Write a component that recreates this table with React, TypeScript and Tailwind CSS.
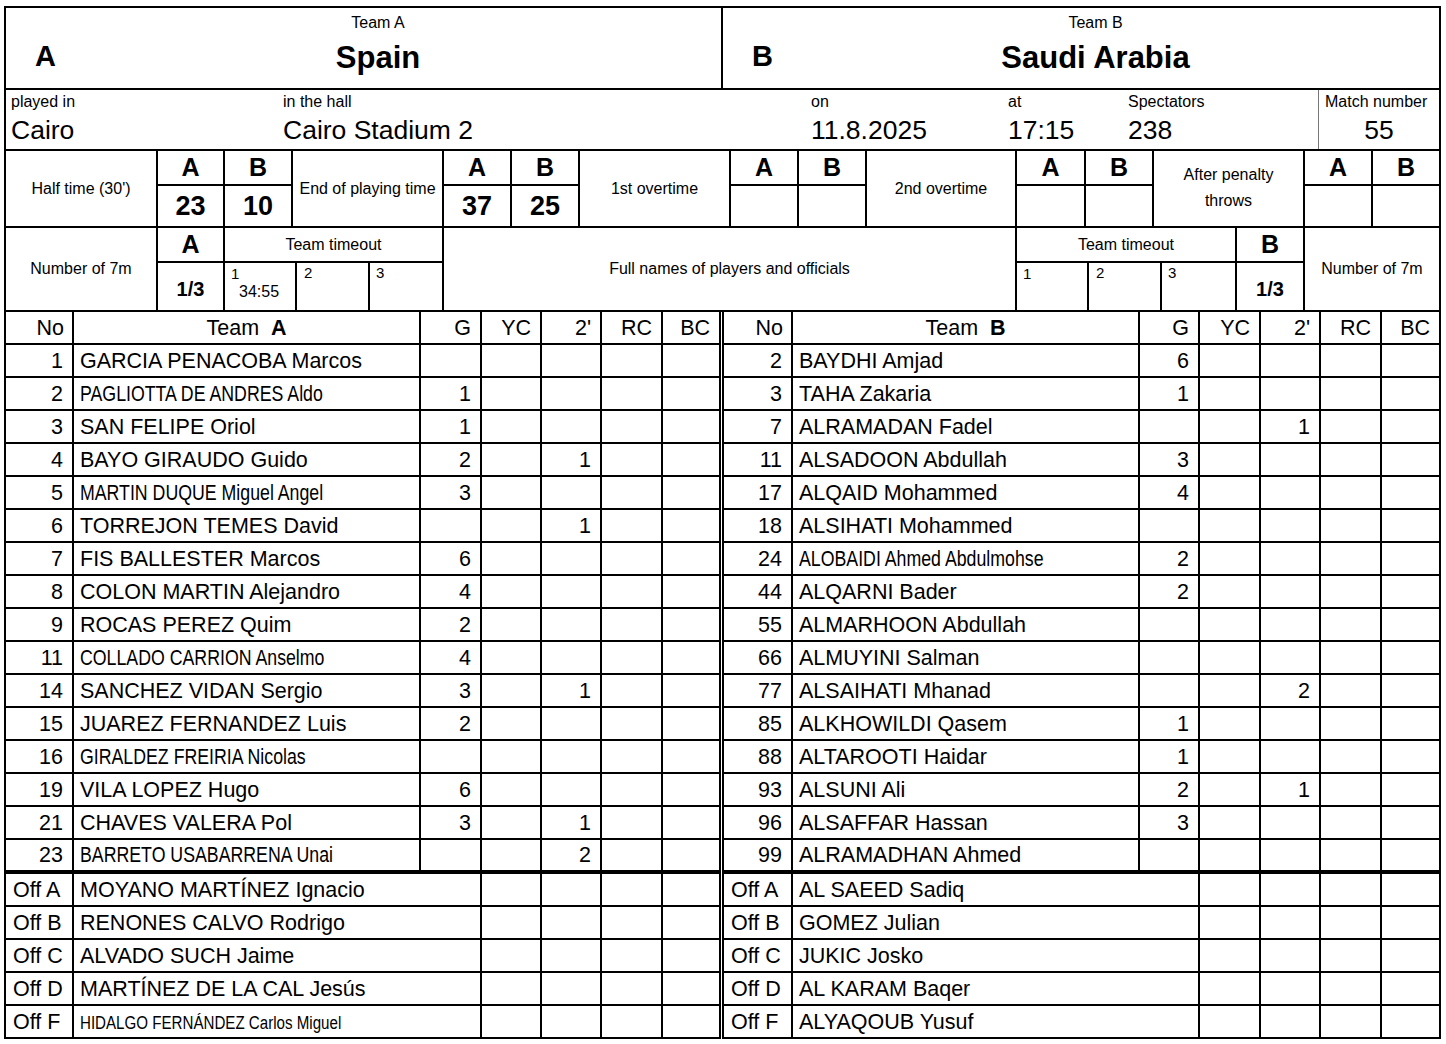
import React from "react";

type Player = { no: string; name: string; g?: string; two?: string; narrow?: boolean; small?: boolean };

const teamA: Player[] = [
  { no: "1", name: "GARCIA PENACOBA Marcos" },
  { no: "2", name: "PAGLIOTTA DE ANDRES Aldo", g: "1", narrow: true },
  { no: "3", name: "SAN FELIPE Oriol", g: "1" },
  { no: "4", name: "BAYO GIRAUDO Guido", g: "2", two: "1" },
  { no: "5", name: "MARTIN DUQUE Miguel Angel", g: "3", narrow: true },
  { no: "6", name: "TORREJON TEMES David", two: "1" },
  { no: "7", name: "FIS BALLESTER Marcos", g: "6" },
  { no: "8", name: "COLON MARTIN Alejandro", g: "4" },
  { no: "9", name: "ROCAS PEREZ Quim", g: "2" },
  { no: "11", name: "COLLADO CARRION Anselmo", g: "4", narrow: true },
  { no: "14", name: "SANCHEZ VIDAN Sergio", g: "3", two: "1" },
  { no: "15", name: "JUAREZ FERNANDEZ Luis", g: "2" },
  { no: "16", name: "GIRALDEZ FREIRIA Nicolas", narrow: true },
  { no: "19", name: "VILA LOPEZ Hugo", g: "6" },
  { no: "21", name: "CHAVES VALERA Pol", g: "3", two: "1" },
  { no: "23", name: "BARRETO USABARRENA Unai", two: "2", narrow: true },
];

const teamB: Player[] = [
  { no: "2", name: "BAYDHI Amjad", g: "6" },
  { no: "3", name: "TAHA Zakaria", g: "1" },
  { no: "7", name: "ALRAMADAN Fadel", two: "1" },
  { no: "11", name: "ALSADOON Abdullah", g: "3" },
  { no: "17", name: "ALQAID Mohammed", g: "4" },
  { no: "18", name: "ALSIHATI Mohammed" },
  { no: "24", name: "ALOBAIDI Ahmed Abdulmohse", g: "2", narrow: true },
  { no: "44", name: "ALQARNI Bader", g: "2" },
  { no: "55", name: "ALMARHOON Abdullah" },
  { no: "66", name: "ALMUYINI Salman" },
  { no: "77", name: "ALSAIHATI Mhanad", two: "2" },
  { no: "85", name: "ALKHOWILDI Qasem", g: "1" },
  { no: "88", name: "ALTAROOTI Haidar", g: "1" },
  { no: "93", name: "ALSUNI Ali", g: "2", two: "1" },
  { no: "96", name: "ALSAFFAR Hassan", g: "3" },
  { no: "99", name: "ALRAMADHAN Ahmed" },
];

const offA: Player[] = [
  { no: "Off A", name: "MOYANO MARTÍNEZ Ignacio" },
  { no: "Off B", name: "RENONES CALVO Rodrigo" },
  { no: "Off C", name: "ALVADO SUCH Jaime" },
  { no: "Off D", name: "MARTÍNEZ DE LA CAL Jesús" },
  { no: "Off F", name: "HIDALGO FERNÁNDEZ Carlos Miguel", small: true },
];

const offB: Player[] = [
  { no: "Off A", name: "AL SAEED Sadiq" },
  { no: "Off B", name: "GOMEZ Julian" },
  { no: "Off C", name: "JUKIC Josko" },
  { no: "Off D", name: "AL KARAM Baqer" },
  { no: "Off F", name: "ALYAQOUB Yusuf" },
];

function Name({ p }: { p: Player }) {
  if (p.small)
    return <span className="inline-block origin-left scale-x-[0.84] whitespace-nowrap text-[18px]">{p.name}</span>;
  if (p.narrow)
    return <span className="inline-block origin-left scale-x-[0.825] whitespace-nowrap">{p.name}</span>;
  return <span className="whitespace-nowrap">{p.name}</span>;
}

const cell = "flex items-center border-r-2 border-black pt-[2px]";

function Half({
  side,
  players,
  officials,
  cols,
  extra,
}: {
  side: string;
  players: Player[];
  officials: Player[];
  cols: string;
  extra: string;
}) {
  return (
    <div className={`flex flex-col border-l-2 border-black ${extra}`}>
      <div className={`grid ${cols} h-[33px]`}>
        <div className={`${cell} border-b-2 justify-end pr-[8px]`}>No</div>
        <div className={`${cell} border-b-2 justify-center`}>
          Team&nbsp;&nbsp;<b>{side}</b>
        </div>
        {["G", "YC", "2'", "RC", "BC"].map((h) => (
          <div key={h} className={`${cell} border-b-2 justify-end pr-[9px]`}>
            {h}
          </div>
        ))}
      </div>
      {players.map((p, i) => {
        const last = i === players.length - 1;
        const bb = last ? "border-b-4" : "border-b-2";
        return (
          <div key={p.no} className={`grid ${cols} ${last ? "h-[34px]" : "h-[33px]"}`}>
            <div className={`${cell} ${bb} justify-end pr-[9px]`}>{p.no}</div>
            <div className={`${cell} ${bb} pl-[6px] overflow-hidden`}>
              <Name p={p} />
            </div>
            <div className={`${cell} ${bb} justify-end pr-[9px]`}>{p.g ?? ""}</div>
            <div className={`${cell} ${bb} justify-end pr-[9px]`}></div>
            <div className={`${cell} ${bb} justify-end pr-[9px]`}>{p.two ?? ""}</div>
            <div className={`${cell} ${bb} justify-end pr-[9px]`}></div>
            <div className={`${cell} ${bb} justify-end pr-[9px]`}></div>
          </div>
        );
      })}
      {officials.map((p) => (
        <div key={p.no} className={`grid ${cols} h-[33px]`}>
          <div className={`${cell} border-b-2 pl-[7px] whitespace-nowrap`}>{p.no}</div>
          <div className={`${cell} border-b-2 col-span-2 pl-[6px] overflow-hidden`}>
            <Name p={p} />
          </div>
          <div className={`${cell} border-b-2`}></div>
          <div className={`${cell} border-b-2`}></div>
          <div className={`${cell} border-b-2`}></div>
          <div className={`${cell} border-b-2`}></div>
        </div>
      ))}
    </div>
  );
}

function ScoreCol({ w, head, val }: { w: string; head: string; val: string }) {
  return (
    <div className={`flex flex-col border-r-2 border-black ${w}`}>
      <div className="flex h-[35px] items-center justify-center border-b-2 border-black text-[25px] font-bold leading-none">
        {head}
      </div>
      <div className="flex flex-1 items-center justify-center text-[27px] font-bold leading-none">{val}</div>
    </div>
  );
}

function Label({ w, children }: { w: string; children: React.ReactNode }) {
  return (
    <div className={`flex items-center justify-center border-r-2 border-black text-center text-[16px] ${w}`}>
      {children}
    </div>
  );
}

function Info({ w, label, value }: { w: string; label: string; value: string }) {
  return (
    <div className={`flex flex-col pl-[5px] pt-[3px] ${w}`}>
      <div className="text-[16px] leading-[18px]">{label}</div>
      <div className="mt-[4px] text-[26.5px] leading-[30px]">{value}</div>
    </div>
  );
}

function Timeout({ w, labels, first }: { w: string; labels: string[]; first?: string }) {
  return (
    <div className={`flex flex-col border-r-2 border-black ${w}`}>
      <div className="flex h-[35px] items-center justify-center border-b-2 border-black text-[16px]">Team timeout</div>
      <div className="flex flex-1">
        <div className="flex w-[72px] flex-col border-r-2 border-black pl-[6px] pt-[2px]">
          <div className="text-[15px] leading-[17px]">{labels[0]}</div>
          {first ? <div className="mt-[1px] pl-[8px] text-[16px] leading-[18px]">{first}</div> : null}
        </div>
        <div className="w-[73px] border-r-2 border-black pl-[7px] pt-[1px] text-[15px] leading-[17px]">{labels[1]}</div>
        <div className="flex-1 pl-[6px] pt-[1px] text-[15px] leading-[17px]">{labels[2]}</div>
      </div>
    </div>
  );
}

function SevenM({ w, head, val }: { w: string; head: string; val: string }) {
  return (
    <div className={`flex flex-col border-r-2 border-black ${w}`}>
      <div className="flex h-[35px] items-center justify-center border-b-2 border-black text-[25px] font-bold leading-none">
        {head}
      </div>
      <div className="flex flex-1 items-center justify-center pt-[4px] text-[20px] font-bold leading-none">{val}</div>
    </div>
  );
}

export default function App() {
  return (
    <div className="h-[1044px] w-[1446px] bg-white text-black font-['Liberation_Sans',Arial,sans-serif]">
      <div className="ml-[4px] w-[1437px] pt-[6px]">
        <div className="border-l-2 border-t-2 border-black">
          {/* Header */}
          <div className="flex h-[82px] border-b-2 border-black">
            <div className="grid w-[717px] grid-cols-[60px_1fr_31px] border-r-2 border-black">
              <div className="pl-[29px] pt-[31px] text-[29px] font-bold leading-[34px]">A</div>
              <div className="flex flex-col items-center pt-[6px]">
                <div className="text-[16px] leading-[18px]">Team A</div>
                <div className="mt-[8px] text-[31px] font-bold leading-[36px]">Spain</div>
              </div>
              <div></div>
            </div>
            <div className="grid flex-1 grid-cols-[60px_1fr_31px] border-r-2 border-black">
              <div className="pl-[29px] pt-[31px] text-[29px] font-bold leading-[34px]">B</div>
              <div className="flex flex-col items-center pt-[6px]">
                <div className="text-[16px] leading-[18px]">Team B</div>
                <div className="mt-[8px] text-[31px] font-bold leading-[36px]">Saudi Arabia</div>
              </div>
              <div></div>
            </div>
          </div>

          {/* Row 2 */}
          <div className="flex h-[61px] border-b-2 border-black">
            <Info w="w-[272px]" label="played in" value="Cairo" />
            <Info w="w-[528px]" label="in the hall" value="Cairo Stadium 2" />
            <Info w="w-[197px]" label="on" value="11.8.2025" />
            <Info w="w-[120px]" label="at" value="17:15" />
            <Info w="w-[195px]" label="Spectators" value="238" />
            <div className="flex flex-1 flex-col border-l border-r-2 border-l-[#777] border-r-black pt-[3px]">
              <div className="pl-[6px] text-[16px] leading-[18px]">Match number</div>
              <div className="mt-[4px] text-center text-[26.5px] leading-[30px]">55</div>
            </div>
          </div>

          {/* Row 3 */}
          <div className="flex h-[77px] border-b-2 border-black">
            <Label w="w-[152px]">Half time (30')</Label>
            <ScoreCol w="w-[67px]" head="A" val="23" />
            <ScoreCol w="w-[68px]" head="B" val="10" />
            <Label w="w-[151px]">End of playing time</Label>
            <ScoreCol w="w-[68px]" head="A" val="37" />
            <ScoreCol w="w-[68px]" head="B" val="25" />
            <Label w="w-[151px]">1st overtime</Label>
            <ScoreCol w="w-[68px]" head="A" val="" />
            <ScoreCol w="w-[68px]" head="B" val="" />
            <Label w="w-[150px]">2nd overtime</Label>
            <ScoreCol w="w-[69px]" head="A" val="" />
            <ScoreCol w="w-[68px]" head="B" val="" />
            <Label w="w-[151px]">
              <span className="-mt-[2px] leading-[26px]">
                After penalty
                <br />
                throws
              </span>
            </Label>
            <ScoreCol w="w-[68px]" head="A" val="" />
            <ScoreCol w="flex-1" head="B" val="" />
          </div>

          {/* Row 4 */}
          <div className="flex h-[84px] border-b-2 border-black">
            <Label w="w-[152px]">Number of 7m</Label>
            <SevenM w="w-[67px]" head="A" val="1/3" />
            <Timeout w="w-[219px]" labels={["1", "2", "3"]} first="34:55" />
            <Label w="w-[573px]">Full names of players and officials</Label>
            <Timeout w="w-[220px]" labels={["1", "2", "3"]} />
            <SevenM w="w-[68px]" head="B" val="1/3" />
            <Label w="flex-1">Number of 7m</Label>
          </div>
        </div>

        {/* Tables */}
        <div className="flex text-[21.5px] leading-none">
          <Half
            side="A"
            players={teamA}
            officials={offA}
            cols="grid-cols-[68px_347px_61px_60px_60px_61px_58px]"
            extra="w-[717px]"
          />
          <Half
            side="B"
            players={teamB}
            officials={offB}
            cols="grid-cols-[69px_347px_60px_61px_60px_61px_59px]"
            extra="ml-[1px] w-[719px]"
          />
        </div>
      </div>
    </div>
  );
}
